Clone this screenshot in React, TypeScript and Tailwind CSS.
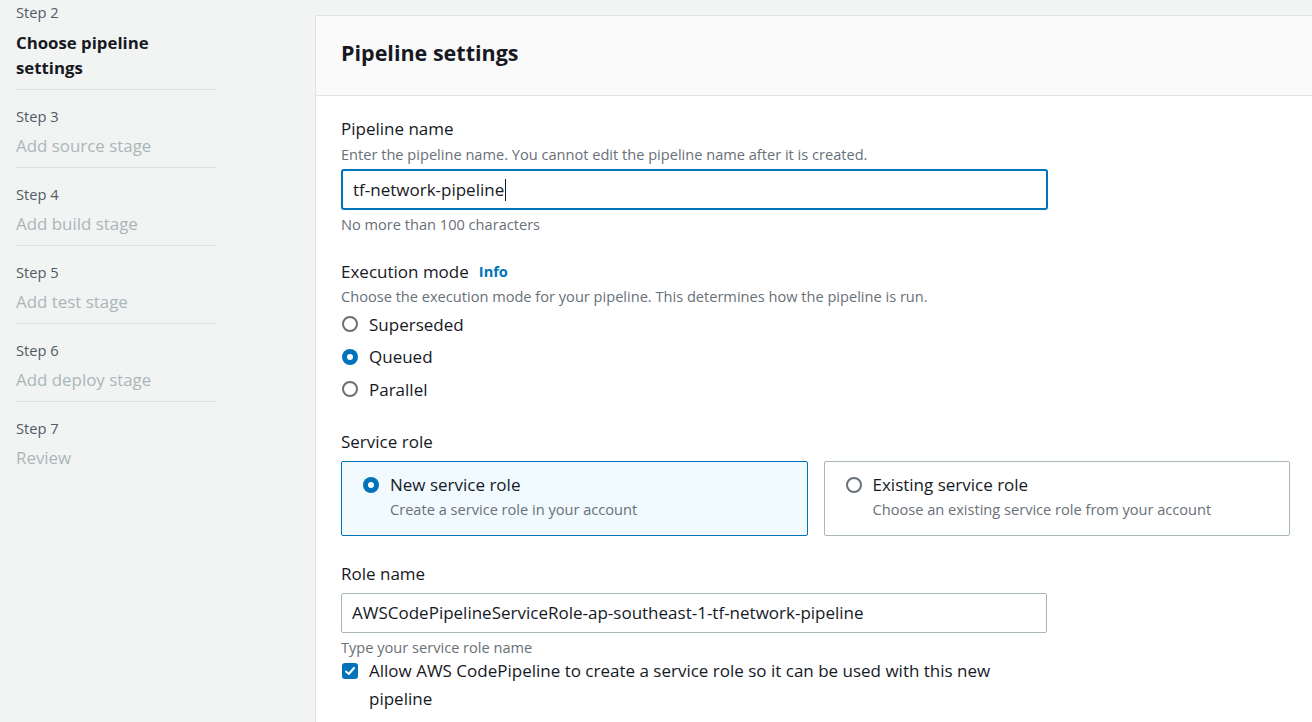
import React from "react";

const font = { fontFamily: '"Open Sans", "Noto Sans", Arial, sans-serif' };

function Step({ n, label, active, first }: { n: number; label: React.ReactNode; active?: boolean; first?: boolean }) {
  return (
    <div className={`${first ? "pt-[2px]" : "pt-[16px] border-t border-[#dde2e2]"} pb-[9px]`}>
      <div className="text-[14.7px] leading-[20px] text-[#545b64]">Step {n}</div>
      <div
        className={`mt-[8px] ${active ? "text-[16.8px] leading-[25px] font-bold text-[#16191f]" : "text-[16.9px] leading-[24px] text-[#aab7b8]"}`}
      >
        {label}
      </div>
    </div>
  );
}

function Radio({ checked }: { checked?: boolean }) {
  return checked ? (
    <span className="block w-[16px] h-[16px] rounded-full bg-[#0073bb] flex items-center justify-center shrink-0">
      <span className="block w-[6px] h-[6px] rounded-full bg-white" />
    </span>
  ) : (
    <span className="block w-[16px] h-[16px] rounded-full border-2 border-[#687078] bg-white shrink-0" />
  );
}

export default function App() {
  return (
    <div style={font} className="w-[1312px] h-[722px] overflow-hidden bg-[#f2f3f3] flex">
      <nav className="w-[315px] shrink-0 pl-[16px]">
        <div className="w-[200px]">
          <Step n={2} first active label={<>Choose pipeline<br />settings</>} />
          <Step n={3} label="Add source stage" />
          <Step n={4} label="Add build stage" />
          <Step n={5} label="Add test stage" />
          <Step n={6} label="Add deploy stage" />
          <Step n={7} label="Review" />
        </div>
      </nav>
      <main className="flex-1 mt-[15px] bg-white border-l border-t border-[#e1e4e4]">
        <header className="h-[80px] bg-[#fafafa] border-b border-[#e1e4e4] pl-[25px] flex items-center">
          <h2 className="text-[21.5px] font-bold text-[#16191f] leading-[28px] mt-[-5px]">Pipeline settings</h2>
        </header>
        <div className="pl-[25px] pr-[22px] pt-[21px]">
          {/* Pipeline name */}
          <div className="text-[17px] leading-[24px] text-[#16191f]">Pipeline name</div>
          <div className="text-[14.6px] leading-[20px] text-[#687078] mt-[3px]">
            Enter the pipeline name. You cannot edit the pipeline name after it is created.
          </div>
          <div className="mt-[5px] w-[707px] h-[41px] border-2 border-[#0073bb] rounded-[3px] flex items-center pl-[10px] text-[17px] text-[#16191f]">
            <span>tf-network-pipeline</span>
            <span className="block w-px h-[22px] bg-[#16191f] ml-[1px]" />
          </div>
          <div className="text-[14.6px] leading-[20px] text-[#687078] mt-[4px]">No more than 100 characters</div>

          {/* Execution mode */}
          <div className="mt-[26px] flex items-center gap-[10px]">
            <span className="text-[17px] leading-[24px] text-[#16191f]">Execution mode</span>
            <span className="text-[14.6px] font-bold text-[#0073bb]">Info</span>
          </div>
          <div className="text-[14.6px] leading-[20px] text-[#687078] mt-[2px]">
            Choose the execution mode for your pipeline. This determines how the pipeline is run.
          </div>
          <div className="mt-[2px] flex flex-col">
            {[
              ["Superseded", false],
              ["Queued", true],
              ["Parallel", false],
            ].map(([l, c]) => (
              <div key={l as string} className="h-[32.5px] flex items-center gap-[11px] pl-[1px]">
                <Radio checked={c as boolean} />
                <span className="text-[17px] text-[#16191f]">{l}</span>
              </div>
            ))}
          </div>

          {/* Service role */}
          <div className="mt-[24px] text-[17px] leading-[24px] text-[#16191f]">Service role</div>
          <div className="mt-[7px] grid grid-cols-2 gap-[16px]">
            <div className="h-[75px] border border-[#0073bb] bg-[#f1faff] rounded-[2px] pl-[21px] pt-[10px] flex gap-[11px]">
              <div className="mt-[5px]"><Radio checked /></div>
              <div>
                <div className="text-[17px] leading-[26px] text-[#16191f]">New service role</div>
                <div className="text-[14.6px] leading-[20px] text-[#687078] mt-[1px]">Create a service role in your account</div>
              </div>
            </div>
            <div className="h-[75px] border border-[#aab7b8] bg-white rounded-[2px] pl-[21px] pt-[10px] flex gap-[11px]">
              <div className="mt-[5px]"><Radio /></div>
              <div>
                <div className="text-[17px] leading-[26px] text-[#16191f]">Existing service role</div>
                <div className="text-[14.6px] leading-[20px] text-[#687078] mt-[1px]">Choose an existing service role from your account</div>
              </div>
            </div>
          </div>

          {/* Role name */}
          <div className="mt-[26px] text-[17px] leading-[24px] text-[#16191f]">Role name</div>
          <div className="mt-[7px] w-[706px] h-[40px] border border-[#aab7b8] rounded-[2px] flex items-center pl-[10px] text-[17px] text-[#16191f]">
            AWSCodePipelineServiceRole-ap-southeast-1-tf-network-pipeline
          </div>
          <div className="text-[14.6px] leading-[20px] text-[#687078] mt-[4px]">Type your service role name</div>
          <div className="mt-0 flex gap-[11px]">
            <span className="mt-[6px] w-[16px] h-[16px] rounded-[3px] bg-[#0073bb] flex items-center justify-center shrink-0 ml-[1px]">
              <svg width="12" height="12" viewBox="0 0 12 12" fill="none">
                <path d="M2 6.5L4.8 9L10 3" stroke="white" strokeWidth="2" strokeLinecap="round" strokeLinejoin="round" />
              </svg>
            </span>
            <span className="text-[17px] leading-[28px] text-[#16191f]">
              Allow AWS CodePipeline to create a service role so it can be used with this new
              <br />
              pipeline
            </span>
          </div>
        </div>
      </main>
    </div>
  );
}
